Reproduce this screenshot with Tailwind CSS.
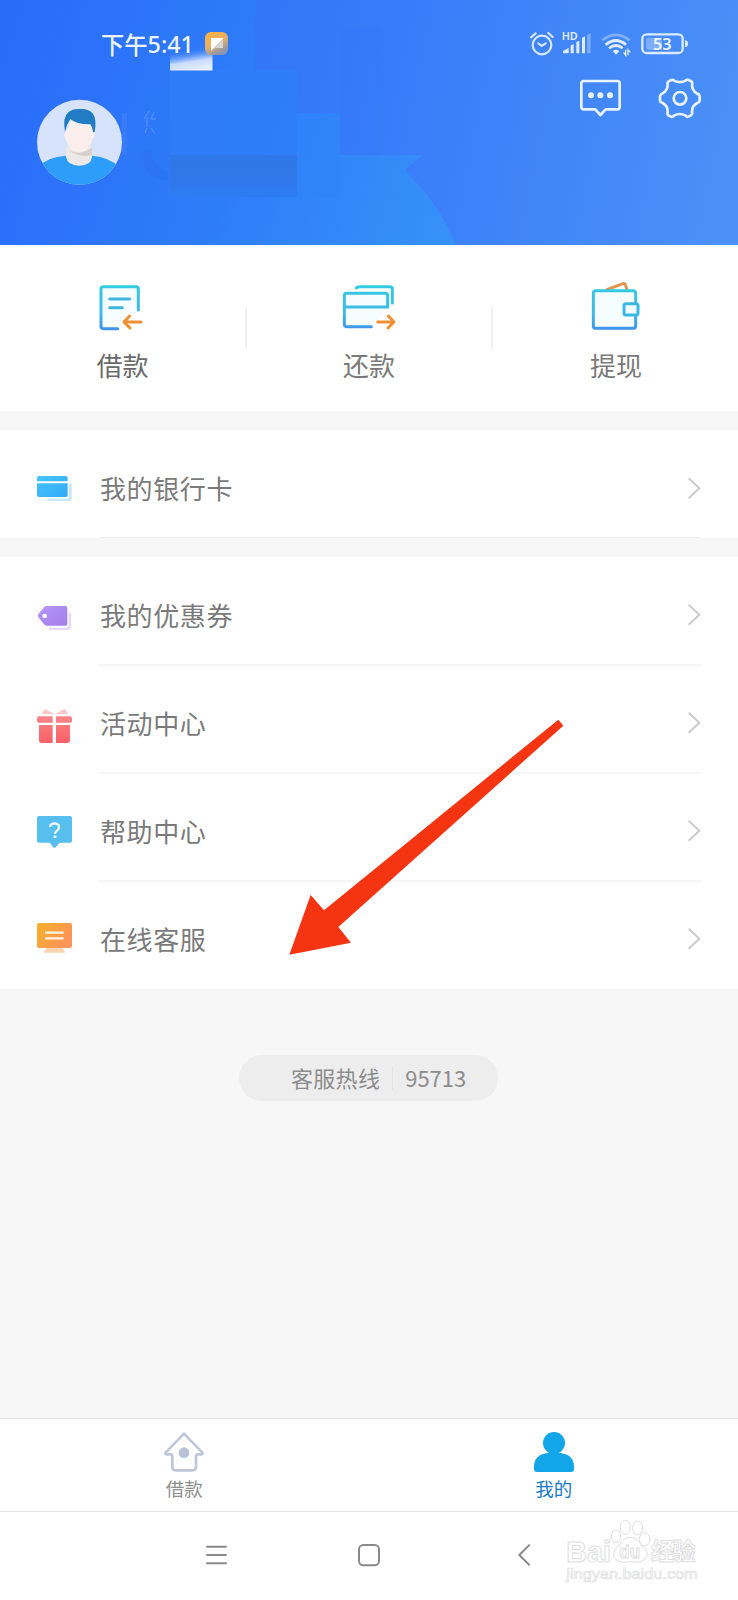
<!DOCTYPE html>
<html lang="zh-CN">
<head>
<meta charset="utf-8">
<title>我的</title>
<script src="https://cdn.jsdelivr.net/npm/@tailwindcss/browser@4"></script>
</head>
<body class="bg-[#f7f7f7]">
<div class="relative flex h-[1600px] w-[738px] flex-col overflow-hidden bg-[#f7f7f7] font-['Noto_Sans_CJK_SC',sans-serif] text-[#7a7a7a]">

  <!-- Header -->
  <header class="relative h-[245px] shrink-0 overflow-hidden">
    <svg class="absolute inset-0" width="738" height="245" viewBox="0 0 738 245">
      <defs>
        <linearGradient id="hl" gradientUnits="userSpaceOnUse" x1="0" y1="60" x2="440" y2="200"><stop offset="0" stop-color="#2a6cfa"/><stop offset=".55" stop-color="#2e7df8"/><stop offset="1" stop-color="#3690f8"/></linearGradient>
        <linearGradient id="hr" gradientUnits="userSpaceOnUse" x1="260" y1="80" x2="738" y2="180"><stop offset="0" stop-color="#3377f8"/><stop offset=".3" stop-color="#397df9"/><stop offset="1" stop-color="#4b91f7"/></linearGradient>
        <linearGradient id="wh" x1=".35" y1="0" x2=".65" y2="1"><stop offset=".1" stop-color="#4f90f8" stop-opacity="0"/><stop offset=".6" stop-color="#c9dcfb"/><stop offset="1" stop-color="#e8f0fd"/></linearGradient>
        <linearGradient id="ap" x1="0" y1="0" x2="0.5" y2="1"><stop offset="0" stop-color="#ffb13d"/><stop offset=".55" stop-color="#e9b061"/><stop offset="1" stop-color="#8b95b0"/></linearGradient>
        <linearGradient id="fl" x1="0" y1="0" x2="1" y2="1"><stop offset=".5" stop-color="#fff"/><stop offset=".5" stop-color="#d5d0ca"/><stop offset="1" stop-color="#ddd"/></linearGradient>
        <linearGradient id="dk" x1="0" y1="0" x2="0" y2="1"><stop offset="0" stop-color="#2d77e6"/><stop offset=".7" stop-color="#2e78eb"/><stop offset="1" stop-color="#2e7cf4"/></linearGradient>
      </defs>
      <rect width="738" height="245" fill="url(#hl)"/>
      <path d="M257 0Q253 18 255 36V70H297V113H340V155H424Q414 160 405 171Q438 202 456 245H738V0Z" fill="url(#hr)"/>
      <path d="M170 71H297V155H170Z" fill="#2e7df8" opacity=".8"/>
      <path d="M297 113H340V198H297Z" fill="#2f84f8" opacity=".6"/>
      <path d="M340 28H382V155H340Z" fill="#3478f8" opacity=".2"/>
      <path d="M170 155H297V197H170Z" fill="url(#dk)"/>
      <path d="M122 113H127V155H122Z" fill="#4480fa" opacity=".5"/>
      <path d="M145 150Q140 162 147 172Q155 181 168 180V172Q152 166 151 150Z" fill="#2a69ef" opacity=".3"/>
      <path d="M149 111L144 119M147 117V127M154 112L151 119M151 119H156M147 128L145 133M151 128L155 134" stroke="#70a2fb" stroke-width="1.3" fill="none" opacity=".55"/>
      <path d="M170 48H212.500V70.500H170Z" fill="url(#wh)"/>
      <rect x="205" y="32" width="23" height="23" rx="6" fill="url(#ap)"/>
      <path d="M211 38H223V48H215L211 51Z" fill="url(#fl)"/>
    </svg>

    <div class="relative flex h-[26px] items-center pl-[101px] mt-[31px]">
      <div class="flex w-[428px] items-center text-[23.300px] leading-[26px] font-medium text-[#edf4ff]"><span>下午</span><span class="font-['Noto_Sans']">5:41</span></div>
      <svg width="26" height="26" viewBox="483 93 78 78" fill="none" stroke="#d6e6ff" stroke-width="6.500" stroke-linecap="round"><circle cx="522" cy="135" r="28"/><path d="M511 130L521 138L533 130M489 112L503 100M541 99L554 111"/></svg>
      <svg class="ml-1.5" width="31" height="26" viewBox="579 93 93 78" fill="#e1edff"><text x="581" y="120" font-family="Noto Sans" font-weight="600" font-size="31" textLength="48" lengthAdjust="spacingAndGlyphs">HD</text><path d="M585 160V153L602 144V160ZM608 160V136L617 133V160ZM625 160V126L634 122V160ZM642 160V114L651 109V160Z"/><path d="M657 160V105L668 100V160Z" opacity=".35"/></svg>
      <svg class="ml-2" width="31" height="26" viewBox="696 93 93 78" fill="none" stroke="#e1edff" stroke-width="8"><path d="M703 121Q744 88 785 121" opacity=".4"/><path d="M713 134Q744 109 774 134M723 145Q744 128 764 145"/><path d="M734 153Q744 145 754 153L744 164Z" fill="#e1edff" stroke="none"/><path d="M773 149V166L767 157M780 166V149L787 157" stroke-width="4"/></svg>
      <svg class="ml-[9px]" width="50" height="26" viewBox="816 93 150 78"><rect x="823" y="103" width="121" height="56" rx="13" fill="none" stroke="#dcebff" stroke-width="7"/><path d="M842 113H882V150H842Q834 150 834 142V121Q834 113 842 113Z" fill="#7eaefb"/><path d="M951 121Q960 121 960 131Q960 141 951 141Z" fill="#dcebff"/><text x="855" y="150" font-family="Noto Sans" font-weight="600" font-size="47" fill="#edf4ff" textLength="56" lengthAdjust="spacingAndGlyphs">53</text></svg>
    </div>

    <div class="relative flex items-start pl-[36px] pt-[19px]">
      <svg class="mt-[23px]" width="87" height="87" viewBox="108 297 261 261">
        <clipPath id="av"><circle cx="238.500" cy="427" r="127.500"/></clipPath>
        <g clip-path="url(#av)"><path d="M100 290H370V560H100Z" fill="#d7e3fb"/>
        <path d="M110 505Q140 470 198 467Q238 480 276 467Q330 470 370 510V560H110Z" fill="#2c9df8"/>
        <path d="M198 440H276V470Q274 496 238 497Q202 496 198 470Z" fill="#ece8e8"/>
        <path d="M205 450Q240 470 276 442V465Q242 476 205 450Z" fill="#d9cfcd"/>
        <path d="M196 398Q188 404 198 418Q208 456 238 456Q268 456 277 418Q289 404 280 396L272 362H212Z" fill="#faefed"/>
        <path d="M195 396Q187 352 205 337Q218 325 240 327Q268 326 279 341Q291 358 284 396L279 397Q279 384 271 373Q230 374 211 357Q199 374 195 396Z" fill="#217cc3"/></g>
      </svg>
      <svg class="ml-[456px] mt-px" width="44" height="42" viewBox="633 231 132 126" fill="none" stroke="#e9f2ff" stroke-width="8" stroke-linejoin="round"><path d="M648 243H748Q755 243 755 250V321Q755 328 748 328H713L697 345L682 328H648Q640 328 640 321V250Q640 243 648 243Z"/><g fill="#e9f2ff" stroke="none"><circle cx="669" cy="286" r="9"/><circle cx="697" cy="286" r="9"/><circle cx="726" cy="286" r="9"/></g></svg>
      <svg class="ml-[35px] mt-px" width="44" height="42" viewBox="870 231 132 126" fill="none" stroke="#e9f2ff" stroke-width="8" stroke-linejoin="round"><path d="M910 240Q915 238 918 242Q935 251 953 242Q957 237 962 240L970 244Q974 247 972 253Q972 272 986 280Q994 282 995 289V302Q994 307 988 309Q971 318 972 337Q974 342 969 346L961 350Q957 352 953 347Q935 337 918 347Q914 352 909 350L901 346Q897 342 899 337Q900 318 884 309Q876 307 876 301V289Q877 283 884 280Q899 272 899 253Q897 247 902 244Z"/><circle cx="936" cy="295" r="19"/></svg>
    </div>
  </header>

  <!-- Quick actions -->
  <section class="flex h-[166px] shrink-0 bg-white text-[26px] leading-[30px]">
    <div class="flex flex-1 flex-col items-center pt-[36px] text-[#6a6a6a]">
      <svg width="48" height="51" viewBox="298 93 144 153" fill="none" stroke-width="9" stroke-linecap="round" stroke-linejoin="round"><defs><linearGradient id="cy" gradientUnits="userSpaceOnUse" x1="0" y1="105" x2="0" y2="240"><stop stop-color="#32cbe3"/><stop offset=".65" stop-color="#41b7e6"/><stop offset="1" stop-color="#3e91e9"/></linearGradient></defs><path d="M304 110H416V180L358 237H304Z" fill="#f5fdff"/><path d="M416 180V116Q416 110 409 110H311Q304 110 304 117V229Q304 236 311 236H354" stroke="url(#cy)"/><path d="M330 147H390M330 173H368" stroke="#42b5e0"/><path d="M424 216H374M390 198L373 216L391 234" stroke="#ef9035"/></svg>
      <span class="mt-[18px] pr-px">借款</span>
    </div>
    <div class="-mx-px mt-[62px] h-[42px] w-[2px] bg-[#f0f0f0]"></div>
    <div class="flex flex-1 flex-col items-center pt-[36px]">
      <svg width="58" height="51" viewBox="1021 93 174 153" fill="none" stroke-width="9" stroke-linecap="round" stroke-linejoin="round"><path d="M1034 131H1164V171L1120 230H1034Z" fill="#f5fdff"/><path d="M1070 114Q1073 110 1080 110H1171Q1178 110 1178 117V159M1034 171H1164V137Q1164 130 1157 130H1041Q1034 130 1034 137V223Q1034 230 1041 230H1115" stroke="url(#cy)"/><path d="M1134 216H1182M1166 198L1183 216L1165 234" stroke="#ef9035"/></svg>
      <span class="mt-[18px]">还款</span>
    </div>
    <div class="-mx-px mt-[62px] h-[42px] w-[2px] bg-[#f0f0f0]"></div>
    <div class="flex flex-1 flex-col items-center pt-[36px]">
      <svg width="54" height="51" viewBox="661 93 162 153" fill="none" stroke-width="9" stroke-linecap="round" stroke-linejoin="round"><path d="M718 119L766 101Q771 99 773 104L778 118" stroke="#e5954c"/><path d="M804 160V130Q804 122 795 122H685Q677 122 677 130V227Q677 235 685 235H795Q804 235 804 227V196" stroke="url(#cy)" fill="#f5fdff"/><rect x="769" y="161" width="42" height="34" rx="6" stroke="#3bb9e5" fill="#f4fdff"/></svg>
      <span class="mt-[18px] pl-[2px]">提现</span>
    </div>
  </section>

  <!-- Bank card -->
  <section class="mt-[19px] shrink-0 bg-white">
    <div class="flex h-[108px] items-center pl-[36px] pr-[37px]">
      <svg width="38" height="50" viewBox="108 87 114 150"><defs><linearGradient id="bk" x1="0" y1="0" x2="1" y2="1"><stop stop-color="#44c6fb"/><stop offset="1" stop-color="#35a8f8"/></linearGradient></defs><path d="M207 160H215V203Q215 213 205 213H141V206H198Q207 206 207 197Z" fill="#c5e8fd"/><path d="M117 138H197Q203 138 203 144V154H111V144Q111 138 117 138ZM111 160H203V195Q203 201 197 201H117Q111 201 111 195Z" fill="url(#bk)"/></svg>
      <div class="ml-[25px] flex h-full flex-1 items-center justify-between border-b border-[#ededed] pt-[8px]"><span class="pl-[1px] text-[26px] tracking-[.6px]">我的银行卡</span><svg width="14" height="24" viewBox="143 135 42 72" fill="none" stroke="#cbcbcb" stroke-width="6"><path d="M148 142L180 172L148 202"/></svg></div>
    </div>
  </section>

  <!-- Menu list -->
  <section class="mt-[19px] shrink-0 bg-white pb-px">
    <div class="flex h-[107px] items-center pl-[36px] pr-[37px]">
      <svg class="mt-px" width="38" height="50" viewBox="108 468 114 150"><defs><linearGradient id="tg" x1="0" y1="0" x2="1" y2="1"><stop stop-color="#b797f8"/><stop offset="1" stop-color="#a17eea"/></linearGradient></defs><path d="M206 549H213V590Q213 600 203 600H147V593H197Q206 593 206 586Z" fill="#e4d8fa"/><path d="M139 528H196Q202 528 202 534V581Q202 587 196 587H139Q135 587 132 583L115 562Q112 558 115 553L132 532Q135 528 139 528Z" fill="url(#tg)"/><circle cx="134" cy="558" r="7" fill="#fff"/></svg>
      <div class="ml-[25px] flex h-full flex-1 items-center justify-between pt-[7px]"><span class="pl-[1px] text-[26px] tracking-[.6px]">我的优惠券</span><svg width="14" height="24" viewBox="143 134 42 72" fill="none" stroke="#cbcbcb" stroke-width="6"><path d="M148 142L180 172L148 202"/></svg></div>
    </div>
    <div class="flex h-[108px] items-center pl-[36px] pr-[37px]">
      <svg class="mt-[2px]" width="38" height="50" viewBox="108 12 114 150"><defs><linearGradient id="gf" x1="0" y1="0" x2="0" y2="1"><stop stop-color="#fa8488"/><stop offset="1" stop-color="#f96065"/></linearGradient></defs><path d="M124 73L132 59Q136 56 141 60L164 73L187 60Q193 55 198 60L205 73Z" fill="#fbc9c9"/><path d="M117 79H158V98H117Q111 98 111 92V85Q111 79 117 79ZM168 79H210Q216 79 216 85V92Q216 98 210 98H168ZM117 105H158V159H125Q117 159 117 151ZM168 105H210V151Q210 159 202 159H168Z" fill="url(#gf)"/></svg>
      <div class="ml-[25px] flex h-full flex-1 items-center justify-between border-t-2 border-[#f6f6f6] pt-[6px]"><span class="pl-[1px] text-[26px] tracking-[.6px]">活动中心</span><svg width="14" height="24" viewBox="143 134 42 72" fill="none" stroke="#cbcbcb" stroke-width="6"><path d="M148 142L180 172L148 202"/></svg></div>
    </div>
    <div class="flex h-[108px] items-center pl-[36px] pr-[37px]">
      <svg class="mt-[2px]" width="38" height="50" viewBox="108 336 114 150"><path d="M117 378H210Q216 378 216 384V452Q216 458 210 458H179L167 472Q164 475 160 472L149 458H117Q111 458 111 452V384Q111 378 117 378Z" fill="#56bfed"/><path d="M150 411Q151 400 164 400Q177 401 177 411Q177 418 171 422Q165 426 165 432" fill="none" stroke="#f1fbff" stroke-width="6.500"/><path d="M161 437H169V444H161Z" fill="#f1fbff"/></svg>
      <div class="ml-[25px] flex h-full flex-1 items-center justify-between border-t-2 border-[#f6f6f6] pt-[6px]"><span class="pl-[1px] text-[26px] tracking-[.6px]">帮助中心</span><svg width="14" height="24" viewBox="143 134 42 72" fill="none" stroke="#cbcbcb" stroke-width="6"><path d="M148 142L180 172L148 202"/></svg></div>
    </div>
    <div class="flex h-[108px] items-center pl-[36px] pr-[37px]">
      <svg class="mt-[2px]" width="38" height="50" viewBox="108 660 114 150"><defs><linearGradient id="sv" x1="0" y1="0" x2="1" y2=".6"><stop stop-color="#f6b128"/><stop offset="1" stop-color="#fb935a"/></linearGradient></defs><path d="M141 773H186L196 786Q197 788 194 788H133Q130 788 131 786Z" fill="#fbd3b0"/><rect x="111" y="699" width="105" height="75" rx="6" fill="url(#sv)"/><path d="M135 728H191M135 745H191" stroke="#fff3e5" stroke-width="7"/></svg>
      <div class="ml-[25px] flex h-full flex-1 items-center justify-between border-t-2 border-[#f6f6f6] pt-[6px]"><span class="pl-[1px] text-[26px] tracking-[.6px]">在线客服</span><svg width="14" height="24" viewBox="143 134 42 72" fill="none" stroke="#cbcbcb" stroke-width="6"><path d="M148 142L180 172L148 202"/></svg></div>
    </div>
  </section>

  <!-- Hotline -->
  <div class="ml-[239px] mt-[66px] flex h-[46px] w-[259px] shrink-0 items-center rounded-full bg-[#ededed] pl-[52px] text-[22px] leading-[44px] text-[#8c8c8c]">
    <span class="tracking-[.3px] pb-[2px]">客服热线</span><span class="ml-3 h-6 w-px bg-[#e3e3e3]"></span><span class="ml-3 pb-[2px]">95713</span>
  </div>

  <!-- Tab bar -->
  <nav class="mt-auto flex h-[94px] shrink-0 border-y border-[#e2e2e2] bg-white text-[18.500px] leading-[22px]">
    <div class="flex flex-1 flex-col items-center pr-px pt-[12px] text-[#8f8f8f]">
      <svg width="42" height="42" viewBox="99 93 126 126" fill="none" stroke="#c0c6d8" stroke-width="8" stroke-linejoin="round"><path d="M162 101L107 158Q104 163 110 163H122Q127 163 127 169V202Q127 211 137 211H187Q198 211 198 202V169Q198 163 203 163H214Q220 163 217 158Z"/><circle cx="162" cy="158" r="16" fill="#b9c1d6" stroke="none"/></svg>
      <span class="mt-[4px]">借款</span>
    </div>
    <div class="flex flex-1 flex-col items-center pt-[12px] text-[#1479c9]">
      <svg width="42" height="42" viewBox="127 93 126 126" fill="#12a5e8"><circle cx="190" cy="129" r="33"/><path d="M170 159H210Q250 165 250 200V207Q250 216 241 216H139Q130 216 130 207V200Q130 165 170 159Z"/></svg>
      <span class="mt-[4px]">我的</span>
    </div>
  </nav>

  <!-- System navigation -->
  <div class="flex h-[88px] shrink-0 items-start bg-white pl-[205px] pt-[31px]">
    <svg width="24" height="24" viewBox="225 430 72 72" stroke="#8a8a8a" stroke-width="6" stroke-linecap="round"><path d="M231 441H288M231 466H288M231 491H288"/></svg>
    <svg class="ml-[128px]" width="24" height="24" viewBox="681 430 72 72" fill="none" stroke="#8a8a8a" stroke-width="6"><rect x="687" y="436" width="60" height="61" rx="13"/></svg>
    <svg class="ml-[135px]" width="16" height="24" viewBox="78 430 48 72" fill="none" stroke="#8a8a8a" stroke-width="6"><path d="M119 435L88 466L119 497"/></svg>
  </div>

  <!-- Watermark -->
  <svg class="absolute left-[560px] top-[1510px]" width="150" height="80" viewBox="210 330 450 240" fill="#fff" stroke="#dedede" stroke-width="3" font-family="Liberation Sans" font-weight="700">
    <text x="229" y="485" font-size="90" textLength="134" lengthAdjust="spacingAndGlyphs">Bai</text>
    <path d="M420 412Q397 413 388 437Q368 447 372 470Q380 492 420 485Q462 492 472 467Q473 446 454 437Q445 413 420 412Z"/>
    <ellipse cx="378" cy="409" rx="14" ry="19"/><ellipse cx="406" cy="382" rx="15" ry="21"/><ellipse cx="443" cy="384" rx="15" ry="21"/><ellipse cx="464" cy="418" rx="16" ry="19"/>
    <text x="388" y="475" font-size="54" textLength="62" lengthAdjust="spacingAndGlyphs">du</text>
    <text x="483" y="480" font-size="70" font-family="Noto Sans CJK SC" textLength="134">经验</text>
    <text x="229" y="536" font-size="44" font-weight="400" stroke-width="2" textLength="394" lengthAdjust="spacingAndGlyphs">jingyan.baidu.com</text>
  </svg>

  <!-- Pointer arrow -->
  <svg class="absolute left-[270px] top-[700px]" width="310" height="270" viewBox="0 0 930 810"><path d="M865 59L880 77L205 681L243 728L58 764L122 585L162 631Z" fill="#f53411"/></svg>
</div>
</body>
</html>
